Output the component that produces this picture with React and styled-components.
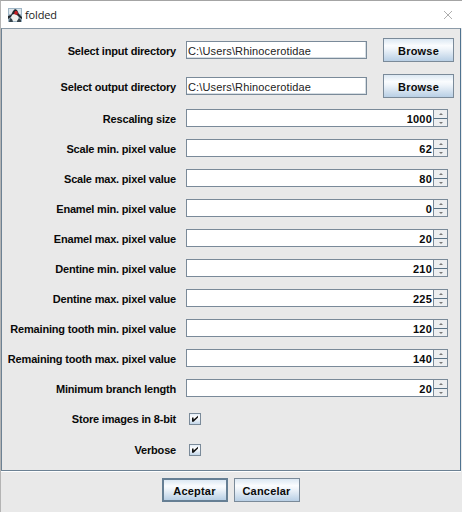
import React, { useState } from "react";
import styled, { createGlobalStyle } from "styled-components";

const GlobalStyle = createGlobalStyle`
  * { box-sizing: border-box; }
  body { margin: 0; background: #e9e9e9; }
`;

const Dialog = styled.div`
  width: 462px;
  height: 512px;
  display: flex;
  flex-direction: column;
  background: #e9e9e9;
  border-top: 1px solid #a4a4a4;
  border-left: 1px solid #b4b4b4;
  font: bold 11px/14px "Liberation Sans", Arial, sans-serif;
  color: #0a0a0a;
  overflow: hidden;
`;

const TitleBar = styled.header`
  height: 27px;
  flex: none;
  display: flex;
  align-items: center;
  padding: 0 10px 0 7px;
  background: #fff;
`;

const Title = styled.h1`
  flex: 1;
  margin: 0 0 0 3px;
  font: 400 11px/14px "Open Sans", "Noto Sans", sans-serif;
  letter-spacing: -0.15px;
  color: #222;
`;

const CloseButton = styled.button`
  display: flex;
  padding: 0;
  border: 0;
  background: none;
`;

const Panel = styled.main`
  height: 443px;
  width: 460px;
  flex: none;
  border: 1px solid #6d8294;
  border-top-color: #8c9ba8;
  border-right: 1px solid #4f7390;
  box-shadow: 0 1px #fff;
  padding-top: 4px;
`;

const Row = styled.div`
  display: grid;
  grid-template-columns: 174px 181px 71px;
  height: ${(p) => p.$height}px;
  padding-top: ${(p) => p.$drop ?? 0}px;
  align-items: center;
`;

const Label = styled.label`
  padding-top: 1px;
  text-align: right;
  white-space: nowrap;
  letter-spacing: -0.19px;
`;

const TextField = styled.input`
  width: 181px;
  height: 18px;
  margin-left: 10px;
  padding: 1px 1px 0;
  border: 1px solid #7a8a99;
  border-radius: 0;
  box-shadow: inset -1px -1px #d5dde3;
  background: #fff;
  font: 400 11px/14px "Liberation Sans", Arial, sans-serif;
  letter-spacing: 0.14px;
  color: #222;
  outline: none;
`;

const MetalButton = styled.button`
  width: ${(p) => p.$width}px;
  height: ${(p) => p.$height}px;
  padding: 1px 0 0;
  border: ${(p) => (p.$primary ? 2 : 1)}px solid ${(p) => (p.$primary ? "#667f94" : "#7a8a99")};
  border-radius: 0;
  background: linear-gradient(#dce8f3 0%, #fafcfe 30%, #f0f5fa 45%, #b8cfe5 100%);
  font: inherit;
  letter-spacing: 0.2px;
  color: #0a0a0a;
`;

const BrowseButton = styled(MetalButton)`
  margin-left: 26px;
`;

const SpinnerFrame = styled.div`
  display: flex;
  width: 262px;
  height: 18px;
  margin-left: 10px;
  border: 1px solid #7a8a99;
  background: #fff;
`;

const SpinnerValue = styled.input`
  flex: 1;
  min-width: 0;
  padding: 1px 1px 0 0;
  border: 0;
  background: none;
  font: inherit;
  letter-spacing: 0.2px;
  text-align: right;
  color: #0a0a0a;
  outline: none;
`;

const Steppers = styled.div`
  width: 14px;
  display: grid;
  grid-template-rows: 1fr 1fr;
  border-left: 1px solid #7a8a99;
`;

const Step = styled.button`
  display: flex;
  align-items: center;
  justify-content: center;
  padding: 0;
  border: 0;
  background: #eceef0;

  & + & { border-top: 1px solid #587286; }
`;

const Check = styled.button`
  width: 12px;
  height: 12px;
  margin-left: 13px;
  padding: 0;
  display: flex;
  align-items: center;
  justify-content: center;
  border: 1px solid #7a8a99;
  background: linear-gradient(#e4edf6, #fff 35%, #c3d6e9);
`;

const Footer = styled.footer`
  display: flex;
  justify-content: center;
  gap: 6px;
  padding: 7px 2px 0 0;
`;

const JavaIcon = () => (
  <svg width="14" height="14" viewBox="0 0 14 14">
    <path d="M0 0h14v14H0z" fill="#9fb6c6" />
    <path d="M1 1h12v5H1z" fill="#dce5eb" />
    <path d="M7 1L9 2 11 6 14 9V11L12 10 10 8 5 6 3 9 0 11V8L3 7 5 3z" fill="#20272c" />
    <path d="M4 7l3-1 3 2 1 4-2 1H5l-2-3z" fill="#eef0ed" />
    <path d="M7 3l2 0 1 2-1 2-3-1z" fill="#c51e25" />
    <path d="M2 10l2 1 1 3H1zm7 3l2-3 2 2v2H9z" fill="#35434c" />
  </svg>
);

const Spinner = ({ id, initial }) => {
  const [value, setValue] = useState(initial);
  const step = (n) => setValue((v) => Math.max(0, Number(v) + n));
  return (
    <SpinnerFrame>
      <SpinnerValue id={id} value={value} onChange={(e) => setValue(e.target.value)} />
      <Steppers>
        <Step aria-label="Increase" onClick={() => step(1)}>
          <svg width="4" height="2" viewBox="0 0 4 2"><path d="M0 2L2 0 4 2z" fill="#777" /></svg>
        </Step>
        <Step aria-label="Decrease" onClick={() => step(-1)}>
          <svg width="4" height="2" viewBox="0 0 4 2"><path d="M0 0L2 2 4 0z" fill="#777" /></svg>
        </Step>
      </Steppers>
    </SpinnerFrame>
  );
};

const Checkbox = ({ label }) => {
  const [checked, setChecked] = useState(true);
  return (
    <Check role="checkbox" aria-label={label} aria-checked={checked} onClick={() => setChecked(!checked)}>
      {checked && (
        <svg width="8" height="8" viewBox="0 0 8 8">
          <path d="M1 2.5h1.6v2L7 0.8v1.7L2.6 6.8H1z" fill="#111" />
        </svg>
      )}
    </Check>
  );
};

const directories = [
  { label: "Select input directory", height: 34, drop: 0 },
  { label: "Select output directory", height: 36, drop: 2 },
];

const settings = [
  ["Rescaling size", 1000],
  ["Scale min. pixel value", 62],
  ["Scale max. pixel value", 80],
  ["Enamel min. pixel value", 0],
  ["Enamel max. pixel value", 20],
  ["Dentine min. pixel value", 210],
  ["Dentine max. pixel value", 225],
  ["Remaining tooth min. pixel value", 120],
  ["Remaining tooth max. pixel value", 140],
  ["Minimum branch length", 20],
];

export default function App() {
  return (
    <>
      <GlobalStyle />
      <Dialog>
        <TitleBar>
          <JavaIcon />
          <Title>folded</Title>
          <CloseButton aria-label="Close">
            <svg width="8" height="8" viewBox="0 0 8 8">
              <path d="M0 0L8 8M8 0L0 8" stroke="#999" strokeWidth="0.8" />
            </svg>
          </CloseButton>
        </TitleBar>
        <Panel>
          {directories.map(({ label, height, drop }) => (
            <Row key={label} $height={height} $drop={drop}>
              <Label htmlFor={label}>{label}</Label>
              <TextField id={label} defaultValue="C:\Users\Rhinocerotidae" />
              <BrowseButton $width={71} $height={24}>Browse</BrowseButton>
            </Row>
          ))}
          {settings.map(([label, value]) => (
            <Row key={label} $height={30}>
              <Label htmlFor={label}>{label}</Label>
              <Spinner id={label} initial={value} />
            </Row>
          ))}
          {["Store images in 8-bit", "Verbose"].map((label) => (
            <Row key={label} $height={31}>
              <Label>{label}</Label>
              <Checkbox label={label} />
            </Row>
          ))}
        </Panel>
        <Footer>
          <MetalButton $width={66} $height={24} $primary>Aceptar</MetalButton>
          <MetalButton $width={66} $height={24}>Cancelar</MetalButton>
        </Footer>
      </Dialog>
    </>
  );
}
